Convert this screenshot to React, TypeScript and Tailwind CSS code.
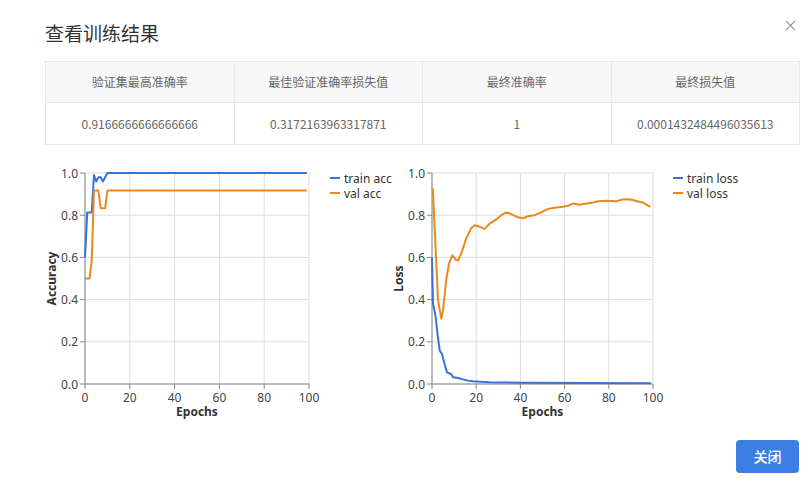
import React from 'react';

type Pt = [number, number];

interface Series {
  name: string;
  color: string;
  data: Pt[];
}

const BLUE = '#3a72d8';
const ORANGE = '#ea8a1e';

const trainAcc: Pt[] = [
  [0, 0.6], [1, 0.8125], [2, 0.8125], [3, 0.8125], [4, 0.99], [5, 0.96],
  [6, 0.98], [7, 0.98], [8, 0.96], [9, 0.98], [10, 1], [99, 1],
];

const valAcc: Pt[] = [
  [0, 0.5], [1, 0.5], [2, 0.5], [3, 0.583], [4, 0.917], [5, 0.917],
  [6, 0.917], [7, 0.833], [8, 0.833], [9, 0.833], [10, 0.917], [99, 0.917],
];

const trainLoss: Pt[] = [
  [0, 0.6], [0.45, 0.38], [1.5, 0.33], [2.7, 0.22], [3.5, 0.158], [4.5, 0.142],
  [5.7, 0.095], [6.8, 0.055], [8, 0.05], [8.7, 0.047], [9.5, 0.032], [11.8, 0.028],
  [14, 0.022], [16.3, 0.016], [18.5, 0.013], [21.6, 0.011], [24, 0.01], [26, 0.008],
  [41, 0.006], [71, 0.005], [99, 0.003],
];

const valLoss: Pt[] = [
  [0, 0.93], [0.4, 0.92], [1.3, 0.72], [2.7, 0.4], [4.2, 0.31], [5, 0.35],
  [6.5, 0.5], [7.7, 0.57], [9.2, 0.61], [10.7, 0.59], [11.8, 0.585], [13.3, 0.62],
  [15.5, 0.69], [17.8, 0.74], [19.3, 0.752], [21.6, 0.745], [23.8, 0.735], [26.1, 0.76],
  [29.1, 0.78], [31.4, 0.8], [33.3, 0.812], [34.8, 0.81], [36.7, 0.8], [38.9, 0.79],
  [41.2, 0.785], [43.4, 0.795], [46.5, 0.8], [49.5, 0.815], [52.5, 0.83], [55.5, 0.835],
  [59.3, 0.84], [61.5, 0.845], [63.8, 0.855], [66.8, 0.85], [69.8, 0.855], [72.9, 0.86],
  [75.1, 0.866], [78.9, 0.868], [83.4, 0.866], [86.4, 0.875], [88.7, 0.876], [90.9, 0.872],
  [93.2, 0.865], [95.5, 0.86], [97, 0.85], [98.8, 0.84],
];

interface ChartProps {
  width: number;
  plotLeft: number;
  plotW: number;
  yTitle: string;
  legendX: number;
  series: Series[];
}

const Chart = ({ width, plotLeft, plotW, yTitle, legendX, series }: ChartProps) => {
  const top = 12;
  const h = 211;
  const sx = (e: number) => plotLeft + (e / 100) * plotW;
  const sy = (v: number) => top + (1 - v) * h;
  const xTicks = [0, 20, 40, 60, 80, 100];
  const yTicks = [0, 0.2, 0.4, 0.6, 0.8, 1.0];
  const yMid = top + h / 2;
  const titleX = plotLeft - 34;

  return (
    <svg width={width} height={265} className="shrink-0 overflow-visible font-['Noto_Sans',sans-serif]">
      {/* grid */}
      {xTicks.map((t) => (
        <line key={`gx${t}`} x1={sx(t)} x2={sx(t)} y1={top} y2={top + h} stroke="#dddddd" strokeWidth={1} />
      ))}
      {yTicks.map((t) => (
        <line key={`gy${t}`} x1={plotLeft} x2={plotLeft + plotW} y1={sy(t)} y2={sy(t)} stroke="#dddddd" strokeWidth={1} />
      ))}

      {/* axes */}
      <line x1={plotLeft} x2={plotLeft} y1={top} y2={top + h} stroke="#888888" strokeWidth={1} />
      <line x1={plotLeft} x2={plotLeft + plotW} y1={top + h} y2={top + h} stroke="#888888" strokeWidth={1} />
      {xTicks.map((t) => (
        <g key={`tx${t}`}>
          <line x1={sx(t)} x2={sx(t)} y1={top + h} y2={top + h + 5} stroke="#888888" strokeWidth={1} />
          <text x={sx(t)} y={top + h + 18} textAnchor="middle" fontSize={12} fill="#444444">
            {t}
          </text>
        </g>
      ))}
      {yTicks.map((t) => (
        <g key={`ty${t}`}>
          <line x1={plotLeft - 5} x2={plotLeft} y1={sy(t)} y2={sy(t)} stroke="#888888" strokeWidth={1} />
          <text x={plotLeft - 7} y={sy(t)} textAnchor="end" dominantBaseline="central" fontSize={12} fill="#444444">
            {t.toFixed(1)}
          </text>
        </g>
      ))}

      {/* axis titles */}
      <text x={plotLeft + plotW / 2} y={top + h + 32} textAnchor="middle" fontSize={12} fontWeight={700} fill="#333333">
        Epochs
      </text>
      <text
        x={titleX}
        y={yMid}
        textAnchor="middle"
        dominantBaseline="central"
        fontSize={12}
        fontWeight={700}
        fill="#333333"
        transform={`rotate(-90 ${titleX} ${yMid})`}
      >
        {yTitle}
      </text>

      {/* data */}
      {series.map((s) => (
        <polyline
          key={s.name}
          points={s.data.map(([e, v]) => `${sx(e).toFixed(2)},${sy(v).toFixed(2)}`).join(' ')}
          fill="none"
          stroke={s.color}
          strokeWidth={2}
          strokeLinejoin="round"
        />
      ))}

      {/* legend */}
      {series.map((s, i) => (
        <g key={`lg${s.name}`}>
          <line x1={legendX} x2={legendX + 10} y1={17 + i * 15} y2={17 + i * 15} stroke={s.color} strokeWidth={2} />
          <text x={legendX + 14} y={17 + i * 15} dominantBaseline="central" fontSize={12} fill="#333333">
            {s.name}
          </text>
        </g>
      ))}
    </svg>
  );
};

const headers = ['验证集最高准确率', '最佳验证准确率损失值', '最终准确率', '最终损失值'];
const values = ['0.9166666666666666', '0.3172163963317871', '1', '0.0001432484496035613'];

export default function App() {
  return (
    <div className="w-[812px] h-[486px] bg-white pl-[45px] pr-[12px] font-['Noto_Sans','Noto_Sans_CJK_SC',sans-serif]">
      <div className="flex items-start justify-between h-[61px] pt-[19px]">
        <h1 className="text-[19px] leading-[28px] text-[#333333] font-normal font-['Noto_Sans_CJK_SC',sans-serif]">
          查看训练结果
        </h1>
        <button className="w-[12px] h-[12px] mr-[4px] flex items-center justify-center">
          <svg width="11" height="11" viewBox="0 0 11 11">
            <path d="M1 1L10 10M10 1L1 10" stroke="#9a9a9a" strokeWidth="1.1" fill="none" />
          </svg>
        </button>
      </div>

      <table className="w-full table-fixed border-collapse border border-[#e8e8e8] text-[12px] text-[#666666] font-['Noto_Sans_CJK_SC',sans-serif]">
        <thead>
          <tr className="h-[41px] bg-[#f7f7f7]">
            {headers.map((h) => (
              <th key={h} className="border border-[#e8e8e8] font-normal text-center">
                {h}
              </th>
            ))}
          </tr>
        </thead>
        <tbody>
          <tr className="h-[42px]">
            {values.map((v, i) => (
              <td key={i} className="border border-[#e8e8e8] text-center">
                {v}
              </td>
            ))}
          </tr>
        </tbody>
      </table>

      <div className="flex mt-[16px]">
        <Chart
          width={345}
          plotLeft={40}
          plotW={224}
          yTitle="Accuracy"
          legendX={285}
          series={[
            { name: 'train acc', color: BLUE, data: trainAcc },
            { name: 'val acc', color: ORANGE, data: valAcc },
          ]}
        />
        <Chart
          width={380}
          plotLeft={42}
          plotW={221}
          yTitle="Loss"
          legendX={283}
          series={[
            { name: 'train loss', color: BLUE, data: trainLoss },
            { name: 'val loss', color: ORANGE, data: valLoss },
          ]}
        />
      </div>

      <div className="flex justify-end mt-[14px] pr-[1px]">
        <button className="w-[63px] h-[33px] rounded-[4px] bg-[#3b7fe3] text-white text-[14px] font-medium font-['Noto_Sans_CJK_SC',sans-serif]">
          关闭
        </button>
      </div>
    </div>
  );
}
